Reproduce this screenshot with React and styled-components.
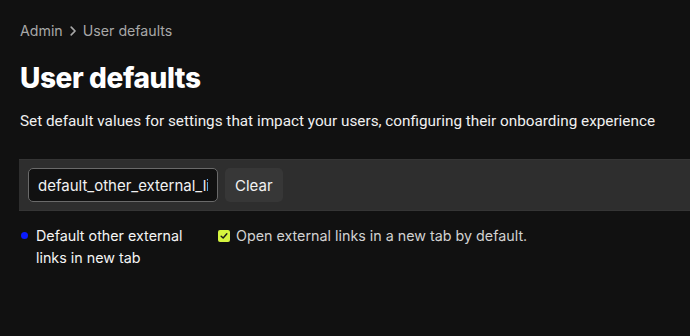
import React from 'react'
import styled, { createGlobalStyle } from 'styled-components'

const GlobalStyle = createGlobalStyle`
  html, body {
    margin: 0;
    padding: 0;
    background: #111111;
    overflow: hidden;
  }
  body {
    font-family: Inter, "Noto Sans", sans-serif;
    color: #f2f2f2;
  }
`

const App = () => {
  return <Page>
    <GlobalStyle />
    <Breadcrumb>
      <span>Admin</span>
      <Chevron viewBox="0 0 10 10">
        <path d="M3.5 1.8 L6.7 5 L3.5 8.2" />
      </Chevron>
      <span>User defaults</span>
    </Breadcrumb>
    <Title>User defaults</Title>
    <Description>
      Set default values for settings that impact your users, configuring their onboarding experience
    </Description>
    <FilterBar>
      <SearchInput defaultValue="default_other_external_links_in_new_tab" />
      <ClearButton>Clear</ClearButton>
    </FilterBar>
    <SettingRow>
      <SettingName>
        <Dot />
        <span>Default other external<br />links in new tab</span>
      </SettingName>
      <CheckLabel>
        <CheckBox>
          <svg viewBox="0 0 12 12" width="10" height="10">
            <path d="M2.6 6.2 L5 8.5 L9.4 3.4" fill="none" stroke="#1a1a1a" strokeWidth="1.7" strokeLinecap="round" strokeLinejoin="round" />
          </svg>
        </CheckBox>
        Open external links in a new tab by default.
      </CheckLabel>
    </SettingRow>
  </Page>
}

const Page = styled.div`
  padding: 21px 0 0 20px;
`

const Breadcrumb = styled.div`
  display: flex;
  align-items: center;
  gap: 4px;
  font-size: 14.2px;
  line-height: 20px;
  color: #a8a8a8;
`

const Chevron = styled.svg`
  width: 12px;
  height: 12px;
  fill: none;
  stroke: #a8a8a8;
  stroke-width: 1.4;
  stroke-linecap: round;
  stroke-linejoin: round;
`

const Title = styled.h1`
  margin: 20px 0 0;
  font-size: 28px;
  line-height: 34px;
  font-weight: 800;
  letter-spacing: -0.4px;
  color: #ffffff;
`

const Description = styled.p`
  margin: 16px 0 0;
  font-family: Roboto, "Noto Sans", sans-serif;
  font-size: 15.3px;
  line-height: 20px;
  color: #f0f0f0;
`

const FilterBar = styled.div`
  margin-top: 28px;
  margin-left: -1px;
  display: flex;
  align-items: center;
  gap: 7px;
  height: 50px;
  padding: 0 9px;
  background: #2e2e2e;
  border-top: 1px solid #353535;
  border-bottom: 1px solid #353535;
`

const SearchInput = styled.input`
  box-sizing: border-box;
  width: 190px;
  height: 34px;
  padding: 0 9px;
  background: #111111;
  border: 1px solid #6a6a6a;
  border-radius: 5px;
  color: #f2f2f2;
  font-family: Inter, "Noto Sans", sans-serif;
  font-size: 15px;
  outline: none;
`

const ClearButton = styled.button`
  height: 34px;
  padding: 0 10px;
  background: #373737;
  border: none;
  border-radius: 5px;
  color: #f2f2f2;
  font-family: Inter, "Noto Sans", sans-serif;
  font-size: 15px;
`

const SettingRow = styled.div`
  display: flex;
  align-items: flex-start;
  margin-top: 14px;
`

const SettingName = styled.div`
  display: flex;
  align-items: flex-start;
  gap: 8px;
  width: 198px;
  font-size: 14.3px;
  line-height: 22px;
  color: #f5f5f5;
`

const Dot = styled.span`
  flex: none;
  width: 7px;
  height: 7px;
  margin: 7px 0 0 1px;
  border-radius: 50%;
  background: #0a1bff;
`

const CheckLabel = styled.label`
  display: flex;
  align-items: center;
  gap: 6px;
  font-size: 14.3px;
  line-height: 22px;
  color: #d2d2d2;
`

const CheckBox = styled.span`
  display: flex;
  align-items: center;
  justify-content: center;
  width: 12px;
  height: 12px;
  border-radius: 2px;
  background: #d5f43f;
`

export default App
